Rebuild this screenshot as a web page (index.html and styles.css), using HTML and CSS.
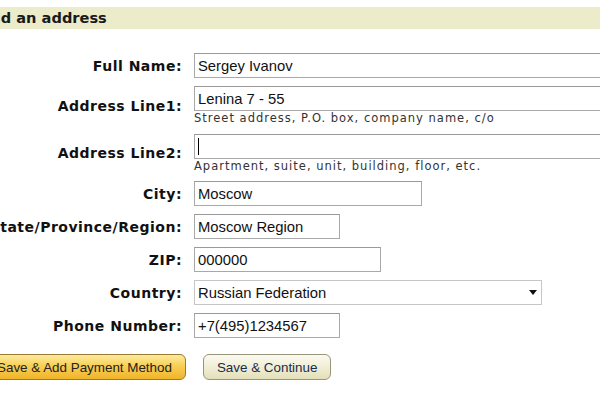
FILE: index.html
```html
<!DOCTYPE html>
<html lang="en">
<head>
<meta charset="utf-8">
<title>Add an address</title>
<link rel="stylesheet" href="styles.css">
</head>
<body>
<div class="page">
  <h2 class="title">Add an address</h2>
  <form class="form">
    <label class="label">Full Name:</label>
    <div class="field"><input class="input w-wide" type="text" value="Sergey Ivanov"></div>

    <label class="label">Address Line1:</label>
    <div class="field">
      <input class="input w-wide" type="text" value="Lenina 7 - 55">
      <div class="hint">Street address, P.O. box, company name, c/o</div>
    </div>

    <label class="label">Address Line2:</label>
    <div class="field">
      <div class="input-wrap">
        <input class="input w-wide" type="text" value="">
        <span class="caret"></span>
      </div>
      <div class="hint">Apartment, suite, unit, building, floor, etc.</div>
    </div>

    <label class="label">City:</label>
    <div class="field"><input class="input w-city" type="text" value="Moscow"></div>

    <label class="label">State/Province/Region:</label>
    <div class="field"><input class="input w-short" type="text" value="Moscow Region"></div>

    <label class="label">ZIP:</label>
    <div class="field"><input class="input w-zip" type="text" value="000000"></div>

    <label class="label">Country:</label>
    <div class="field">
      <div class="select-wrap">
        <select class="select">
          <option>Russian Federation</option>
        </select>
        <svg class="select-arrow" width="8" height="5" viewBox="0 0 8 5"><path d="M0 0H8L4 5Z" fill="#111"/></svg>
      </div>
    </div>

    <label class="label">Phone Number:</label>
    <div class="field"><input class="input w-short" type="text" value="+7(495)1234567"></div>
  </form>
  <div class="actions">
    <button class="btn btn-primary" type="button">Save &amp; Add Payment Method</button>
    <button class="btn btn-secondary" type="button">Save &amp; Continue</button>
  </div>
</div>
</body>
</html>
```
FILE: styles.css
```css
html, body {
  margin: 0;
  padding: 0;
  overflow: hidden;
  background: #fff;
}

.page {
  margin-left: -30px;
  width: 700px;
  padding-top: 7px;
  font-family: "DejaVu Sans", Verdana, sans-serif;
  color: #111;
}

.title {
  margin: 0 0 24px 0;
  height: 22px;
  line-height: 22px;
  padding-left: 9px;
  background: #ecebca;
  font-size: 14.6px;
  font-weight: bold;
  color: #1a1a1a;
}

.form {
  display: grid;
  grid-template-columns: 212px 1fr;
  column-gap: 12px;
  row-gap: 8px;
  align-items: center;
  margin: 0;
}

.label {
  display: flex;
  justify-content: flex-end;
  white-space: nowrap;
  font-size: 14px;
  letter-spacing: 0.5px;
  font-weight: bold;
  color: #111;
}

.field {
  display: flex;
  flex-direction: column;
  align-items: flex-start;
}

.input {
  box-sizing: border-box;
  height: 25px;
  margin: 0;
  padding: 0 3px;
  border: 1px solid #a9a9a9;
  border-top-color: #9a9a9a;
  background: #fff;
  font-family: "Liberation Sans", Arial, sans-serif;
  font-size: 14.8px;
  color: #111;
  outline: none;
}

.w-wide { width: 440px; }
.w-city { width: 228px; }
.w-short { width: 146px; }
.w-zip { width: 187px; }

.input-wrap {
  position: relative;
}

.caret {
  position: absolute;
  left: 4px;
  top: 4px;
  width: 1px;
  height: 17px;
  background: #000;
}

.hint {
  font-size: 11.5px;
  letter-spacing: 1px;
  line-height: 14.5px;
  color: #333;
  white-space: nowrap;
}

.select-wrap {
  position: relative;
  width: 348px;
}

.select {
  -webkit-appearance: none;
  appearance: none;
  box-sizing: border-box;
  width: 100%;
  height: 25px;
  margin: 0;
  padding: 0 3px;
  border: 1px solid #c6c6c6;
  border-radius: 0;
  background: #fff;
  font-family: "Liberation Sans", Arial, sans-serif;
  font-size: 14.8px;
  color: #111;
  outline: none;
}

.select-arrow {
  position: absolute;
  right: 5px;
  top: 10px;
}

.actions {
  display: flex;
  gap: 17px;
  padding-left: 13px;
  margin-top: 16px;
}

.btn {
  box-sizing: border-box;
  height: 26px;
  padding: 0 13px;
  border-radius: 6px;
  font-family: "Liberation Sans", Arial, sans-serif;
  font-size: 13.4px;
  white-space: nowrap;
  cursor: pointer;
}

.btn-primary {
  border: 1px solid #9a7a30;
  background: linear-gradient(#fdeaa0 0%, #f8cf55 45%, #f0b42a 100%);
  color: #222;
}

.btn-secondary {
  border: 1px solid #99957a;
  background: linear-gradient(#fbfaf1 0%, #f1eed6 50%, #e3dfba 100%);
  color: #1c2a4c;
}
```
